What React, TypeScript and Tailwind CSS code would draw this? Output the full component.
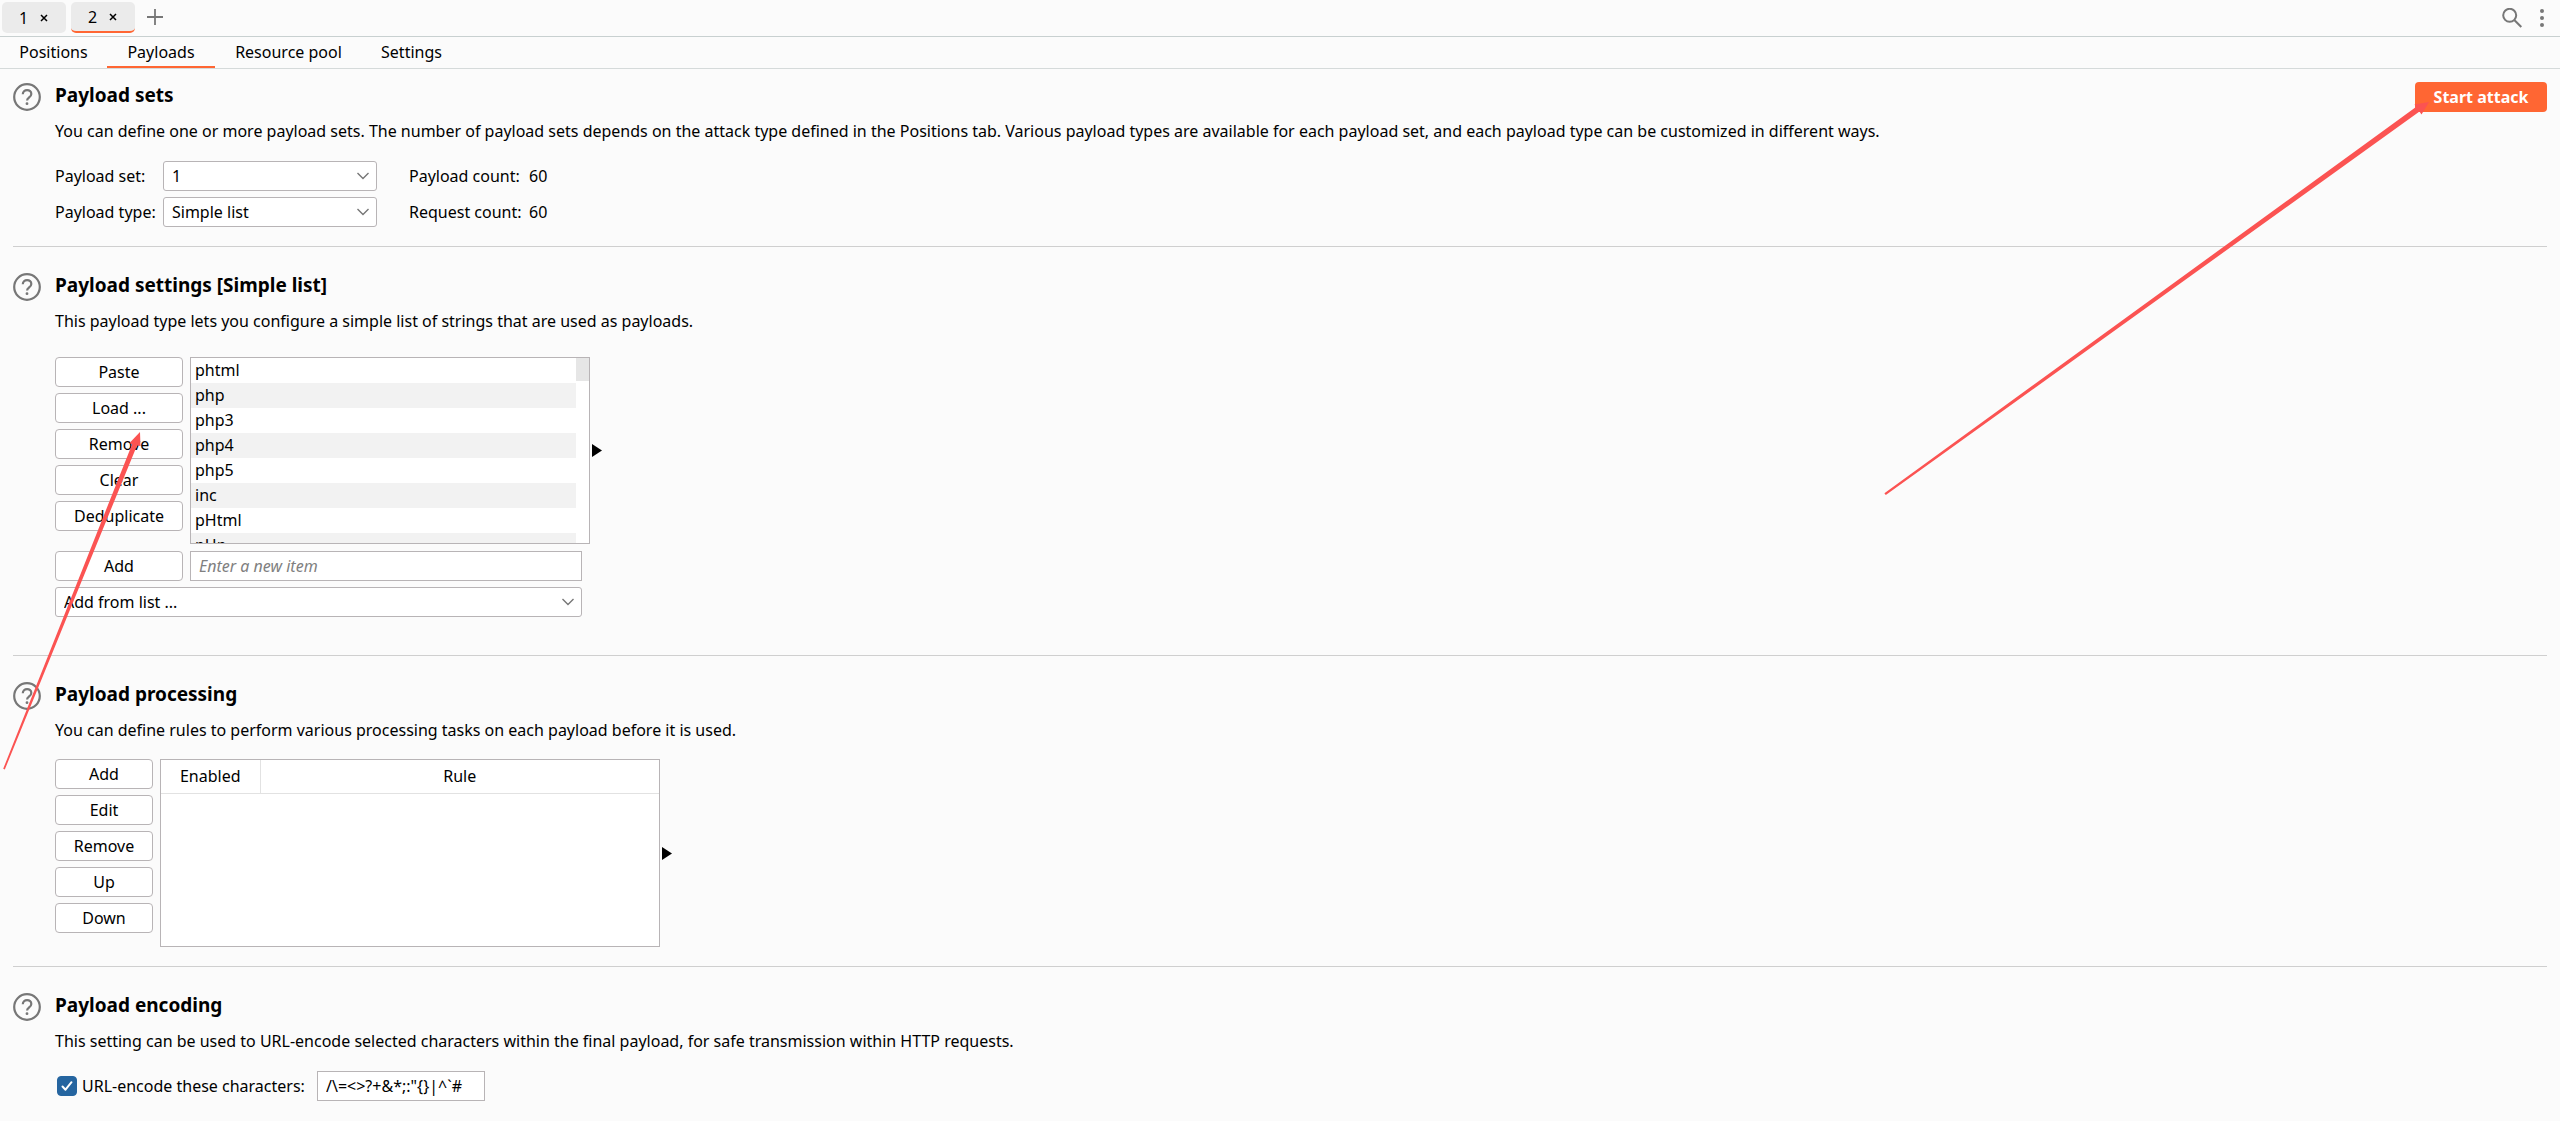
import { useState } from "react";
import type { ReactNode } from "react";
import { clsx } from "clsx";

const attackTabs = ["1", "2"];

const sections = [
  { label: "Positions", width: "w-[107px]" },
  { label: "Payloads", width: "w-[108px]" },
  { label: "Resource pool", width: "w-[147px]" },
  { label: "Settings", width: "w-[99px]" },
];

const payloads = ["phtml", "php", "php3", "php4", "php5", "inc", "pHtml", "pHp"];

function HelpButton({ topic }: { topic: string }) {
  return (
    <button aria-label={`Help: ${topic}`} className="mt-0.5 h-7 w-7 shrink-0">
      <svg viewBox="0 0 28 28" className="h-7 w-7" fill="none" stroke="#777777">
        <circle cx="14" cy="14" r="12.8" strokeWidth="2.2" />
        <path d="M9.8 11.2c0-2.4 1.8-4.1 4.3-4.1 2.4 0 4.2 1.6 4.2 3.8 0 1.8-1 2.7-2.3 3.6-1.2.9-1.9 1.4-1.9 2.9" strokeWidth="2.2" />
        <circle cx="14" cy="20.7" r="1.4" fill="#777777" stroke="none" />
      </svg>
    </button>
  );
}

function Button({ children, className }: { children: ReactNode; className?: string }) {
  return (
    <button
      className={clsx(
        "h-[30px] rounded-[4px] border border-[#b8b4b6] bg-white text-center leading-none hover:bg-[#f4f4f4]",
        className
      )}
    >
      {children}
    </button>
  );
}

interface SelectProps {
  id: string;
  label?: string;
  options: string[];
  className?: string;
}

function Select({ id, label, options, className }: SelectProps) {
  return (
    <div className={clsx("relative", className)}>
      <select
        id={id}
        aria-label={label}
        className="block h-[30px] w-full appearance-none rounded-[3px] border border-[#b8b4b6] bg-white pr-8 pl-2"
      >
        {options.map((option) => (
          <option key={option}>{option}</option>
        ))}
      </select>
      <svg
        viewBox="0 0 14 8"
        className="pointer-events-none absolute top-[11px] right-[7px] h-2 w-3.5"
        fill="none"
        stroke="#777777"
        strokeWidth="1.4"
      >
        <path d="M1.5 1l5.5 5.5L12.5 1" />
      </svg>
    </div>
  );
}

function ExpandHandle() {
  return (
    <button aria-label="Expand" className="ml-0.5 self-center">
      <svg viewBox="0 0 10 13" className="h-[13px] w-2.5">
        <path d="M0 0l10 6.5L0 13z" fill="#000" />
      </svg>
    </button>
  );
}

interface PanelProps {
  title: string;
  description: string;
  first?: boolean;
  className?: string;
  children: ReactNode;
}

function Panel({ title, description, first, className, children }: PanelProps) {
  return (
    <section className={clsx("mx-[13px] flex", first ? "pt-3" : "border-t border-[#cfcfcf] pt-6", className)}>
      <HelpButton topic={title} />
      <div className="ml-3.5 min-w-0 flex-1">
        <h2 className="text-[19px] leading-7 font-bold">{title}</h2>
        <p className="mt-2.5 leading-6">{description}</p>
        {children}
      </div>
      {first && (
        <button className="mt-[1px] h-[30px] w-[132px] shrink-0 rounded-[4px] bg-[#ff6633] font-bold text-white">
          Start attack
        </button>
      )}
    </section>
  );
}

export default function App() {
  const [section, setSection] = useState("Payloads");
  const [encode, setEncode] = useState(true);

  return (
    <div className="relative min-h-screen overflow-hidden bg-[#fbfbfb] font-['Noto_Sans',sans-serif] text-[16px] text-black">
      {/* Attack tabs */}
      <header className="flex h-[37px] items-start border-b border-[#c8d0d0] pt-0.5 pl-0.5">
        <div className="flex gap-[5px]">
          {attackTabs.map((tab) => (
            <div
              key={tab}
              className={clsx(
                "flex h-[31px] w-16 items-center gap-3 rounded-[5px] bg-[#ebebeb] pl-[17px]",
                tab === "2" && "border-b-2 border-[#ff6633]"
              )}
            >
              <button className="leading-none">{tab}</button>
              <button aria-label={`Close ${tab}`}>
                <svg viewBox="0 0 8 8" className="h-2 w-2" stroke="#000" strokeWidth="1.5">
                  <path d="M1 1l6 6M7 1L1 7" />
                </svg>
              </button>
            </div>
          ))}
        </div>
        <button aria-label="New tab" className="mt-[7px] ml-3">
          <svg viewBox="0 0 16 16" className="h-4 w-4" stroke="#777777" strokeWidth="1.8">
            <path d="M8 0v16M0 8h16" />
          </svg>
        </button>
        <div className="mt-1.5 mr-4 ml-auto flex items-center gap-[18px]">
          <button aria-label="Search">
            <svg viewBox="0 0 20 20" className="h-5 w-5" fill="none" stroke="#777777" strokeWidth="2">
              <circle cx="7.7" cy="7.3" r="6.5" />
              <path d="M12.3 12l7 7" />
            </svg>
          </button>
          <button aria-label="More">
            <svg viewBox="0 0 4 20" className="h-5 w-1" fill="#777777">
              <circle cx="2" cy="3" r="2" />
              <circle cx="2" cy="10" r="2" />
              <circle cx="2" cy="17" r="2" />
            </svg>
          </button>
        </div>
      </header>

      {/* Section tabs */}
      <nav className="flex h-8 border-b border-[#d5dada]">
        {sections.map((item) => (
          <button
            key={item.label}
            onClick={() => setSection(item.label)}
            className={clsx(
              "border-b-2 text-center leading-none whitespace-nowrap",
              item.width,
              section === item.label ? "border-[#ff6633]" : "border-transparent"
            )}
          >
            {item.label}
          </button>
        ))}
      </nav>

      <main>
        <Panel
          first
          title="Payload sets"
          description="You can define one or more payload sets. The number of payload sets depends on the attack type defined in the Positions tab. Various payload types are available for each payload set, and each payload type can be customized in different ways."
          className="pb-[19px]"
        >
          <div className="mt-[18px] grid grid-cols-[108px_214px_120px_auto] items-center gap-y-1.5 whitespace-nowrap">
            <label htmlFor="payload-set">Payload set:</label>
            <Select id="payload-set" options={["1"]} />
            <span className="pl-8">Payload count:</span>
            <span className="pl-8">60</span>
            <label htmlFor="payload-type">Payload type:</label>
            <Select id="payload-type" options={["Simple list"]} />
            <span className="pl-8">Request count:</span>
            <span className="pl-8">60</span>
          </div>
        </Panel>

        <Panel
          title="Payload settings [Simple list]"
          description="This payload type lets you configure a simple list of strings that are used as payloads."
          className="pb-[38px]"
        >
          <div className="mt-6 flex">
            <div className="flex w-32 flex-col gap-1.5">
              <Button>Paste</Button>
              <Button>Load ...</Button>
              <Button>Remove</Button>
              <Button>Clear</Button>
              <Button>Deduplicate</Button>
            </div>
            <div className="ml-[7px] flex h-[187px] w-[400px] border border-[#b8b4b6] bg-white">
              <ul className="flex-1 overflow-hidden">
                {payloads.map((payload) => (
                  <li key={payload} className="h-[25px] pl-1 leading-[25px] even:bg-[#f2f2f2]">
                    {payload}
                  </li>
                ))}
              </ul>
              <div className="w-[13px]">
                <div className="h-[23px] bg-[#e6e6e6]" />
              </div>
            </div>
            <ExpandHandle />
          </div>
          <div className="mt-[7px] flex gap-[7px]">
            <Button className="w-32">Add</Button>
            <input
              aria-label="New item"
              placeholder="Enter a new item"
              className="h-[30px] w-[392px] border border-[#b8b4b6] bg-white px-2 placeholder:text-[#808080] placeholder:italic"
            />
          </div>
          <Select id="add-from-list" label="Add from list" options={["Add from list ..."]} className="mt-1.5 w-[527px]" />
        </Panel>

        <Panel
          title="Payload processing"
          description="You can define rules to perform various processing tasks on each payload before it is used."
          className="pb-[19px]"
        >
          <div className="mt-[17px] flex">
            <div className="flex w-[98px] flex-col gap-1.5">
              <Button>Add</Button>
              <Button>Edit</Button>
              <Button>Remove</Button>
              <Button>Up</Button>
              <Button>Down</Button>
            </div>
            <div className="ml-[7px] h-[188px] w-[500px] border border-[#b8b4b6] bg-white">
              <table className="w-full table-fixed border-collapse">
                <thead>
                  <tr className="h-[33px] border-b border-[#e2e2e2]">
                    <th className="w-[99px] border-r border-[#e2e2e2] p-0 font-normal">Enabled</th>
                    <th className="p-0 font-normal">Rule</th>
                  </tr>
                </thead>
                <tbody />
              </table>
            </div>
            <ExpandHandle />
          </div>
        </Panel>

        <Panel
          title="Payload encoding"
          description="This setting can be used to URL-encode selected characters within the final payload, for safe transmission within HTTP requests."
        >
          <div className="mt-[18px] flex items-center">
            <span className="relative ml-0.5 h-5 w-5">
              <input
                id="url-encode"
                type="checkbox"
                checked={encode}
                onChange={(e) => setEncode(e.target.checked)}
                className="block h-5 w-5 appearance-none rounded-[4px] border border-[#b8b4b6] bg-white checked:border-[#2565a0] checked:bg-[#2565a0]"
              />
              {encode && (
                <svg
                  viewBox="0 0 20 20"
                  className="pointer-events-none absolute inset-0"
                  fill="none"
                  stroke="#fff"
                  strokeWidth="2"
                  strokeLinecap="round"
                  strokeLinejoin="round"
                >
                  <path d="M5.5 10.5l3 3.2 6-7.5" />
                </svg>
              )}
            </span>
            <label htmlFor="url-encode" className="w-[240px] pl-[5px] whitespace-nowrap">
              URL-encode these characters:
            </label>
            <input
              aria-label="Characters to encode"
              defaultValue={"/\\=<>?+&*;:\"{}|^`#"}
              className="h-[30px] w-[168px] border border-[#b8b4b6] bg-white px-2"
            />
          </div>
        </Panel>
      </main>

      {/* Callout arrows */}
      <svg viewBox="0 0 150 350" className="pointer-events-none absolute top-[425px] left-0 h-[350px] w-[150px]" fill="#fb5352">
        <path d="M3.2 343.8L132 19.5l-2.5-1.5L140 7l.5 14-3.5-.5L4.8 344.5z" />
      </svg>
      <svg viewBox="0 0 560 410" className="pointer-events-none absolute top-[95px] right-[120px] h-[410px] w-[560px]" fill="#fb5352">
        <path d="M4.4 398.2L536 12l-1.5-2.5L549 7l-7.5 12.5-2-3L5.8 400z" />
      </svg>
    </div>
  );
}
